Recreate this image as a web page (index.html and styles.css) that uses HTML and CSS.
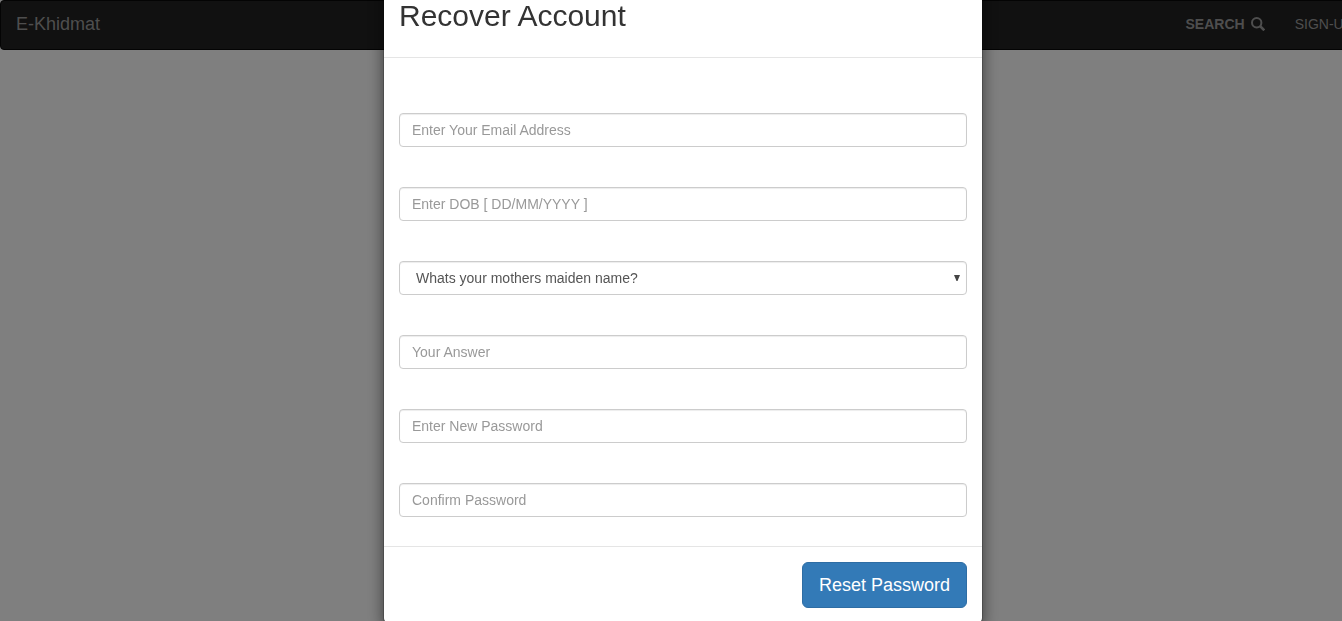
FILE: index.html
```html
<!DOCTYPE html>
<html lang="en">
<head>
<meta charset="utf-8">
<title>E-Khidmat</title>
<link rel="stylesheet" href="styles.css">
</head>
<body>
<div class="page">
  <nav class="navbar">
    <a class="brand" href="#">E-Khidmat</a>
    <div class="nav-links">
      <a class="nav-link nav-search" href="#">SEARCH
        <svg class="nav-icon" viewBox="0 0 14 14" aria-hidden="true"><circle cx="5.7" cy="5.7" r="4.7" fill="none" stroke="currentColor" stroke-width="2"/><path d="M9 9l4.3 4.3" stroke="currentColor" stroke-width="2.6"/></svg>
      </a>
      <a class="nav-link" href="#">SIGN-UP</a>
    </div>
  </nav>
</div>
<div class="backdrop">
  <form class="modal" role="dialog" aria-labelledby="title">
    <header class="modal-header"><h2 class="modal-title" id="title">Recover Account</h2></header>
    <div class="modal-body">
      <input class="control" type="text" aria-label="Email address" placeholder="Enter Your Email Address">
      <input class="control" type="text" aria-label="Date of birth" placeholder="Enter DOB [ DD/MM/YYYY ]">
      <div class="select-wrap">
        <select class="control select" aria-label="Security question">
          <option>Whats your mothers maiden name?</option>
        </select>
        <svg class="arrow" viewBox="0 0 6 6" aria-hidden="true"><path d="M0 0h6L3.5 6h-1z" fill="currentColor"/></svg>
      </div>
      <input class="control" type="text" aria-label="Answer" placeholder="Your Answer">
      <input class="control" type="password" aria-label="New password" placeholder="Enter New Password">
      <input class="control" type="password" aria-label="Confirm password" placeholder="Confirm Password">
    </div>
    <footer class="modal-footer"><button class="btn" type="button">Reset Password</button></footer>
  </form>
</div>
</body>
</html>
```
FILE: styles.css
```css
* { box-sizing: border-box; }

body {
  margin: 0;
  overflow: hidden;
  background: #fff;
  color: #333;
  font: 14px/20px "Liberation Sans", Arial, sans-serif;
}

/* The page runs 24px past the right edge of the window. */
.page { width: calc(100% + 24px); }

.navbar {
  display: flex;
  align-items: center;
  justify-content: space-between;
  min-height: 50px;
  padding: 0 12px 2px 15px;
  background: #222;
  border: 1px solid #080808;
  border-radius: 4px;
}

.brand,
.nav-link {
  color: #9d9d9d;
  text-decoration: none;
}

.brand { font-size: 18px; }

.nav-links {
  display: flex;
  gap: 30px;
}

.nav-link { white-space: nowrap; }

.nav-search {
  display: flex;
  align-items: center;
  gap: 6px;
  font-weight: bold;
}

.nav-icon {
  width: 14px;
  height: 14px;
}

.backdrop {
  position: fixed;
  inset: 0 -24px 0 0;
  overflow: hidden;
  background: rgba(0, 0, 0, 0.5);
}

/* The dialog is scrolled, with its top above the window. */
.modal {
  width: 600px;
  max-width: 100%;
  margin: -37px auto 0;
  background: #fff;
  background-clip: padding-box;
  border: 1px solid rgba(0, 0, 0, 0.2);
  border-radius: 6px;
  box-shadow: 0 5px 15px rgba(0, 0, 0, 0.5);
}

.modal-header {
  padding: 15px;
  border-bottom: 1px solid #e5e5e5;
}

.modal-title {
  margin: 20px 0 10px;
  font-size: 30px;
  font-weight: normal;
  line-height: 33px;
}

.modal-body {
  display: grid;
  gap: 40px;
  padding: 55px 15px 29px;
}

.control {
  display: block;
  width: 100%;
  height: 34px;
  padding: 6px 12px;
  background: #fff;
  border: 1px solid #ccc;
  border-radius: 4px;
  box-shadow: inset 0 1px 1px rgba(0, 0, 0, 0.075);
  color: #555;
  font: inherit;
}

.control::placeholder {
  color: #999;
  opacity: 1;
}

.select-wrap { position: relative; }

.select {
  padding-left: 16px;
  appearance: none;
}

.arrow {
  position: absolute;
  top: 14px;
  right: 7px;
  width: 6px;
  height: 6px;
  color: #444;
  pointer-events: none;
}

.modal-footer {
  display: flex;
  justify-content: flex-end;
  padding: 15px;
  border-top: 1px solid #e5e5e5;
}

.btn {
  padding: 10px 16px;
  background: #337ab7;
  border: 1px solid #2e6da4;
  border-radius: 6px;
  color: #fff;
  font: inherit;
  font-size: 18px;
  line-height: 24px;
}
```
